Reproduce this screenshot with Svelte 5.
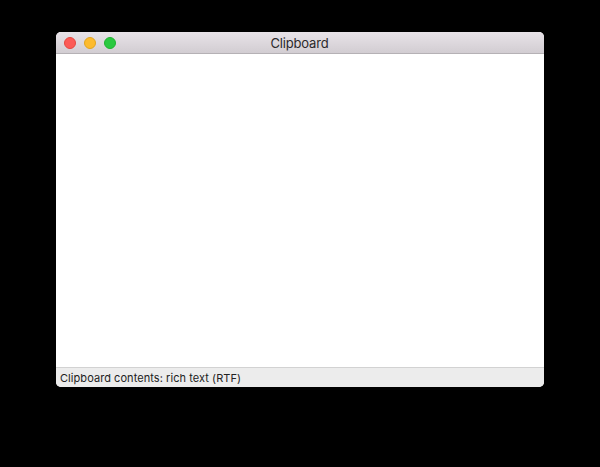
<script>
	let status = 'Clipboard contents: rich text (RTF)';
</script>

<div class="desktop">
	<div class="window">
		<header class="titlebar">
			<div class="traffic">
				<span class="light close"></span>
				<span class="light minimize"></span>
				<span class="light zoom"></span>
			</div>
			<h1>Clipboard</h1>
		</header>
		<main class="content"></main>
		<footer class="statusbar">{status}</footer>
	</div>
</div>

<style>
	:global(body) {
		background: #000;
	}

	.desktop {
		box-sizing: border-box;
		width: 600px;
		height: 467px;
		padding: 32px 56px 80px;
		background: #000;
		font-family: 'Inter', 'Liberation Sans', sans-serif;
	}

	.window {
		display: flex;
		flex-direction: column;
		height: 355px;
		border-radius: 5px;
		overflow: hidden;
		background: #fff;
	}

	.titlebar {
		position: relative;
		flex: none;
		display: flex;
		align-items: center;
		justify-content: center;
		box-sizing: border-box;
		height: 22px;
		background: linear-gradient(#e8e3e8, #d2cdd2);
		border-bottom: 1px solid #b5b1b5;
	}

	.traffic {
		position: absolute;
		left: 8px;
		top: 5px;
		display: flex;
		gap: 8px;
	}

	.light {
		display: block;
		box-sizing: border-box;
		width: 12px;
		height: 12px;
		border-radius: 50%;
	}

	.close {
		background: #fc5b57;
		border: 1px solid #e5483f;
	}

	.minimize {
		background: #fdbb2e;
		border: 1px solid #e2a41f;
	}

	.zoom {
		background: #2ac940;
		border: 1px solid #1fb32f;
	}

	h1 {
		margin: 0 1px 0 0;
		font-size: 13px;
		font-weight: 400;
		line-height: 22px;
		letter-spacing: -0.15px;
		color: #2c2a2c;
	}

	.content {
		flex: 1;
		background: #fff;
	}

	.statusbar {
		flex: none;
		box-sizing: border-box;
		height: 20px;
		padding: 0 4px;
		line-height: 20px;
		font-size: 11px;
		letter-spacing: 0.06px;
		color: #222;
		background: #ececec;
		border-top: 1px solid #d2d2d2;
	}
</style>
